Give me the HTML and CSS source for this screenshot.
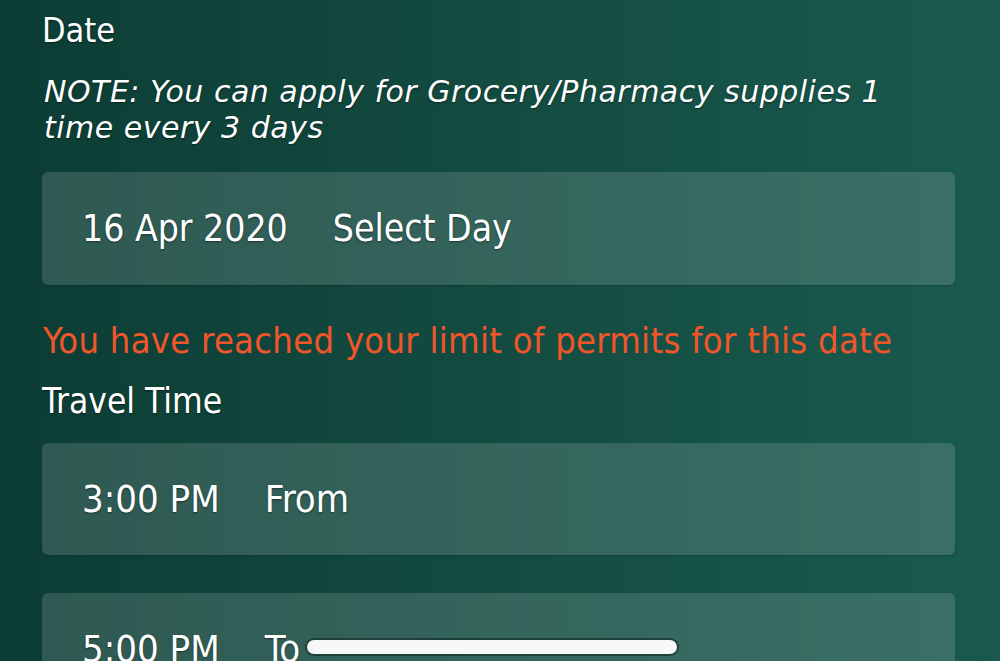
FILE: index.html
```html
<!DOCTYPE html>
<html lang="en">
<head>
    <meta charset="UTF-8">
    <meta name="viewport" content="width=device-width, initial-scale=1.0">
    <title>Permit Request</title>
    <link rel="stylesheet" href="styles.css">
</head>
<body>
    <div class="form-container">
        <div class="label">Date</div>
        <p class="note">NOTE: You can apply for Grocery/Pharmacy supplies 1 time every 3 days</p>

        <div class="field-box date-box">
            <span class="value">16 Apr 2020</span>
            <span class="hint">Select Day</span>
        </div>

        <p class="error">You have reached your limit of permits for this date</p>

        <div class="label travel-label">Travel Time</div>

        <div class="field-box time-box">
            <span class="value">3:00 PM</span>
            <span class="hint">From</span>
        </div>

        <div class="field-box time-box last-box">
            <span class="value">5:00 PM</span>
            <span class="hint">To</span>
            <span class="redact-bar"></span>
        </div>
    </div>
</body>
</html>
```

FILE: styles.css
```css
body {
    margin: 0;
    height: 661px;
    overflow: hidden;
    font-family: "DejaVu Sans Condensed", "Liberation Sans", sans-serif;
    color: #ffffff;
    background: linear-gradient(90deg, #0c3d35 0%, #134a40 45%, #1a5a4e 100%);
}
.form-container {
    padding: 0 45px 0 42px;
}
.label {
    font-size: 34px;
    line-height: 40px;
    padding-top: 10px;
    text-shadow: 0 1px 2px rgba(0, 0, 0, 0.45);
}
.note {
    max-width: 860px;
    margin: 24px 0 0 2px;
    font-family: "DejaVu Sans", sans-serif;
    font-style: italic;
    font-size: 30px;
    line-height: 36px;
    letter-spacing: 0.5px;
    text-shadow: 0 1px 2px rgba(0, 0, 0, 0.45);
}
.field-box {
    display: flex;
    align-items: center;
    gap: 45px;
    height: 113px;
    padding-left: 40px;
    border-radius: 6px;
    background: rgba(255, 255, 255, 0.14);
    box-shadow: 0 1px 2px rgba(0, 0, 0, 0.2);
    font-size: 37px;
    text-shadow: 0 1px 2px rgba(0, 0, 0, 0.45);
}
.date-box {
    margin-top: 26px;
}
.error {
    margin: 34px 0 0 1px;
    font-size: 36px;
    line-height: 44px;
    letter-spacing: 0.3px;
    color: #f0562a;
}
.travel-label {
    padding-top: 0;
    margin-top: 18px;
    font-size: 35px;
}
.time-box {
    height: 112px;
    margin-top: 22px;
    font-size: 38px;
}
.last-box {
    margin-top: 38px;
    gap: 0;
}
.last-box .value {
    margin-right: 45px;
}
.redact-bar {
    width: 370px;
    height: 14px;
    margin: 0 0 5px 7px;
    border-radius: 8px;
    background: #f7f7f7;
    box-shadow: 0 0 0 2px rgba(20, 50, 45, 0.7);
}
```
